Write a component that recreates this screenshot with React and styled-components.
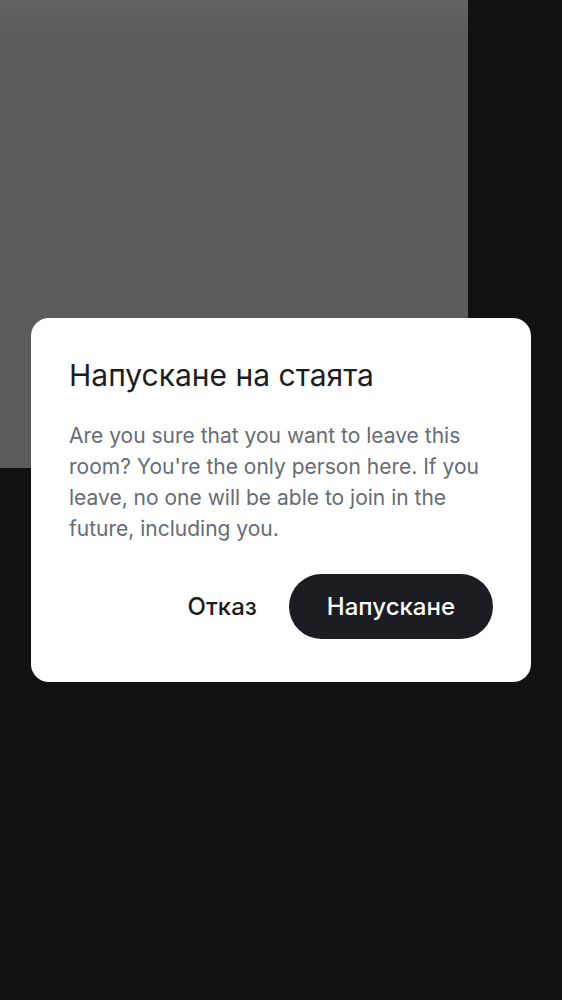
import React from "react";
import styled, { createGlobalStyle } from "styled-components";

const Global = createGlobalStyle`
  html, body { margin: 0; padding: 0; background: #111111; }
  body { font-family: Inter, Roboto, "Noto Sans", sans-serif; }
  #root { min-height: 1000px; }
`;

const Screen = styled.div`
  position: relative;
  width: 562px;
  height: 1000px;
  background: #111111;
  overflow: hidden;
`;

const Tile = styled.div`
  width: 468px;
  height: 468px;
  background: linear-gradient(180deg, #636363 0px, #5b5b5b 40px, #5b5b5b 100%);
`;

const Overlay = styled.div`
  position: absolute;
  inset: 0;
  display: flex;
  align-items: center;
  justify-content: center;
`;

const Dialog = styled.div`
  width: 500px;
  box-sizing: border-box;
  background: #ffffff;
  border-radius: 18px;
  padding: 39px 38px 43px 38px;
  display: flex;
  flex-direction: column;
`;

const Title = styled.h2`
  margin: 0;
  font-size: 30px;
  line-height: 36px;
  font-weight: 400;
  color: #1b1d22;
  letter-spacing: 0;
`;

const Body = styled.p`
  margin: 27px 0 0 0;
  font-size: 21px;
  line-height: 31px;
  color: #656c76;
`;

const Actions = styled.div`
  margin-top: 30px;
  display: flex;
  justify-content: flex-end;
  align-items: center;
  gap: 32px;
`;

const Button = styled.button`
  border: none;
  font-family: Inter, Roboto, "Noto Sans", sans-serif;
  font-size: 24px;
  font-weight: 500;
  height: 65px;
  border-radius: 33px;
  cursor: pointer;
  background: ${(p) => (p.$primary ? "#1b1d22" : "transparent")};
  color: ${(p) => (p.$primary ? "#ffffff" : "#1b1d22")};
  padding: ${(p) => (p.$primary ? "0 38px" : "0")};
`;

export default function App() {
  return (
    <>
      <Global />
      <Screen>
        <Tile />
        <Overlay>
          <Dialog>
            <Title>Напускане на стаята</Title>
            <Body>
              Are you sure that you want to leave this room? You're the only person
              here. If you leave, no one will be able to join in the future,
              including you.
            </Body>
            <Actions>
              <Button>Отказ</Button>
              <Button $primary>Напускане</Button>
            </Actions>
          </Dialog>
        </Overlay>
      </Screen>
    </>
  );
}
